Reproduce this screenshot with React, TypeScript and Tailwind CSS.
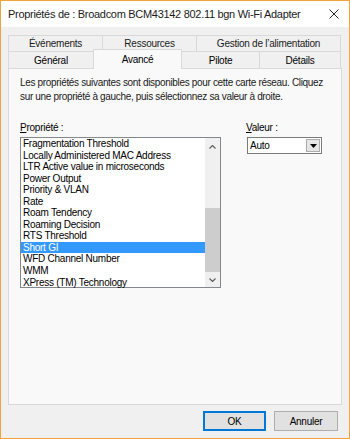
import { useState } from 'react'

const topTabs = [
  { label: 'Événements', w: 'w-[95px]' },
  { label: 'Ressources', w: 'w-[94px]' },
  { label: 'Gestion de l’alimentation', w: 'w-[144px]' },
]

const properties = [
  'Fragmentation Threshold',
  'Locally Administered MAC Address',
  'LTR Active value in microseconds',
  'Power Output',
  'Priority & VLAN',
  'Rate',
  'Roam Tendency',
  'Roaming Decision',
  'RTS Threshold',
  'Short GI',
  'WFD Channel Number',
  'WMM',
  'XPress (TM) Technology',
]

export default function App() {
  const [selected, setSelected] = useState('Short GI')

  return (
    <div
      className="flex h-[439px] w-[350px] flex-col border border-[#f3a23c] bg-[#f0f0f0] text-[10px] tracking-[-0.25px] text-black"
      style={{ fontFamily: '"Liberation Sans", Arial, sans-serif' }}
    >
      {/* title bar */}
      <div className="flex h-[26px] shrink-0 items-center justify-between bg-white pl-[7px] pr-[9px]">
        <span className="whitespace-nowrap text-[11px] tracking-[-0.3px] text-[#1a1a1a]">
          Propriétés de : Broadcom BCM43142 802.11 bgn Wi-Fi Adapter
        </span>
        <svg width="10" height="10" viewBox="0 0 10 10" className="mr-[1px]">
          <path d="M0.5 0.5 L9.5 9.5 M9.5 0.5 L0.5 9.5" stroke="#222" strokeWidth="1" />
        </svg>
      </div>

      <div className="flex flex-1 flex-col px-[7px] pt-[8px]">
        {/* tab rows */}
        <div className="flex h-[16px]">
          {topTabs.map((t, i) => (
            <div
              key={t.label}
              className={`${t.w} flex items-center justify-center border-t border-[#d9d9d9] ${i === 0 ? 'border-l' : ''} border-r bg-[#f0f0f0] text-[#1a1a1a]`}
            >
              {t.label}
            </div>
          ))}
        </div>
        <div className="relative z-10 flex h-[17px] items-end">
          <div className="flex h-[17px] w-[85px] items-center justify-center border-l border-t border-[#d9d9d9] bg-[#f0f0f0]">
            Général
          </div>
          <div className="-mb-[1px] flex h-[20px] w-[89px] items-start justify-center border-l border-r border-t border-[#d9d9d9] bg-[#f9f9f9] pt-[2px]">
            Avancé
          </div>
          <div className="flex h-[17px] w-[78px] items-center justify-center border-t border-r border-[#d9d9d9] bg-[#f0f0f0]">
            Pilote
          </div>
          <div className="flex h-[17px] w-[81px] items-center justify-center border-t border-r border-[#d9d9d9] bg-[#f0f0f0]">
            Détails
          </div>
        </div>

        {/* panel */}
        <div className="flex h-[337px] flex-col border border-[#d9d9d9] bg-[#f9f9f9] px-[11px] pt-[7px]">
          <p className="w-[310px] leading-[14px] tracking-[-0.33px] text-[#1a1a1a]">
            Les propriétés suivantes sont disponibles pour cette carte réseau. Cliquez sur une propriété à gauche, puis sélectionnez sa valeur à droite.
          </p>

          <div className="mt-[17px] flex">
            <div className="w-[201px]">
              <div className="h-[14px] leading-[14px]">
                <span className="underline">P</span>ropriété :
              </div>
              <div className="mt-[2px] flex h-[151px] border border-[#828790] bg-white">
                <ul className="flex-1">
                  {properties.map((p) => (
                    <li
                      key={p}
                      onClick={() => setSelected(p)}
                      className={`h-[11.56px] whitespace-nowrap pl-[2px] leading-[11.56px] ${
                        selected === p ? 'bg-[#3399ff] text-white' : 'text-black'
                      }`}
                    >
                      {p}
                    </li>
                  ))}
                </ul>
                <div className="flex w-[15px] flex-col bg-[#f0f0f0]">
                  <div className="flex h-[17px] items-center justify-center">
                    <svg width="7" height="4" viewBox="0 0 7 4">
                      <path d="M0.5 3.5 L3.5 0.5 L6.5 3.5" stroke="#606060" strokeWidth="1.2" fill="none" />
                    </svg>
                  </div>
                  <div className="mt-[53px] h-[64px] bg-[#cdcdcd]" />
                  <div className="flex flex-1 items-center justify-center">
                    <svg width="7" height="4" viewBox="0 0 7 4">
                      <path d="M0.5 0.5 L3.5 3.5 L6.5 0.5" stroke="#606060" strokeWidth="1.2" fill="none" />
                    </svg>
                  </div>
                </div>
              </div>
            </div>

            <div className="ml-[25px] flex flex-col">
              <div className="h-[14px] leading-[14px]">
                <span className="underline">V</span>aleur :
              </div>
              <div className="ml-[1px] mt-[2px] flex h-[17px] w-[75px] border border-[#7a7a7a] bg-white">
                <div className="flex flex-1 items-center pl-[2px]">Auto</div>
                <div className="m-[1px] flex w-[14px] items-center justify-center border border-[#acacac] bg-[#e5e5e5]">
                  <svg width="7" height="4" viewBox="0 0 7 4">
                    <path d="M0 0 L7 0 L3.5 4 Z" fill="#000" />
                  </svg>
                </div>
              </div>
            </div>
          </div>
        </div>

        {/* buttons */}
        <div className="mt-[6px] flex justify-end gap-[8px] pr-[4px]">
          <button className="h-[20px] w-[63px] border-2 border-[#0078d7] bg-[#e1e1e1] tracking-[-0.25px]">OK</button>
          <button className="h-[20px] w-[64px] border border-[#adadad] bg-[#e1e1e1] tracking-[-0.25px]">Annuler</button>
        </div>
      </div>
    </div>
  )
}
